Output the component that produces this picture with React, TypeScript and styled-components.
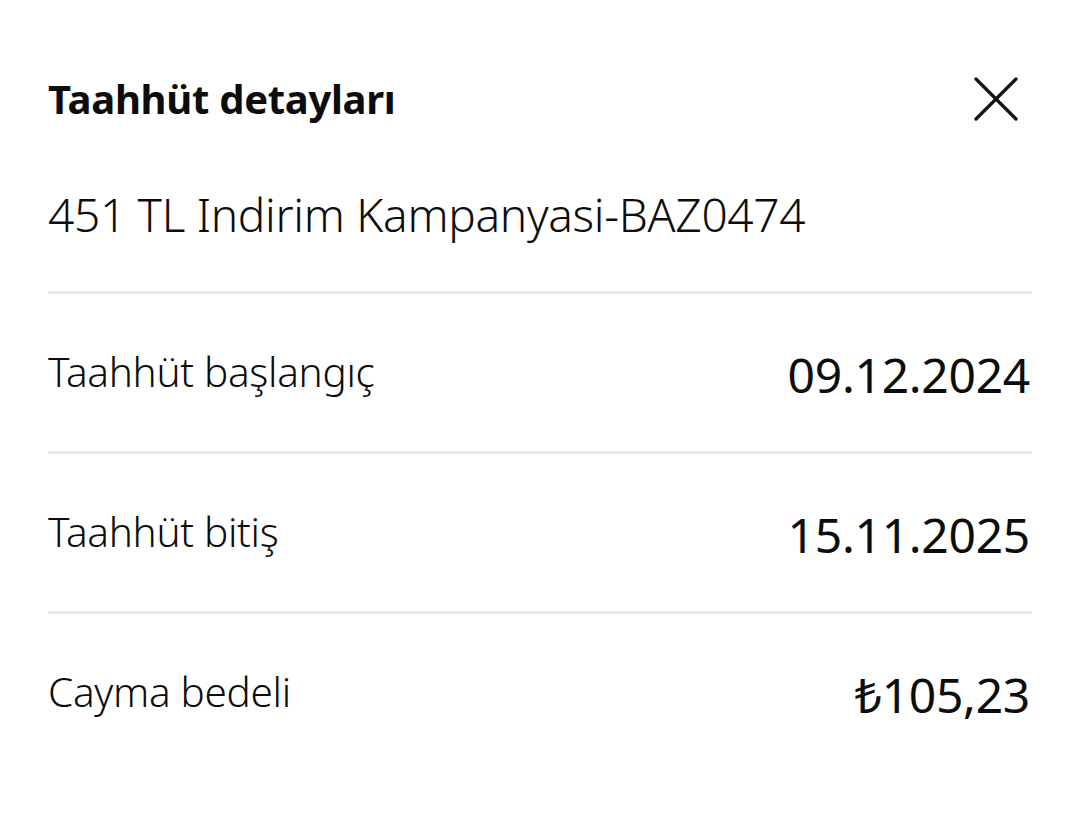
import styled, { createGlobalStyle } from 'styled-components';

const GlobalStyle = createGlobalStyle`
  html, body {
    margin: 0;
    padding: 0;
    background: #ffffff;
  }
  body {
    font-family: 'Noto Sans', 'Open Sans', 'DejaVu Sans', sans-serif;
    color: #0d0d0d;
  }
`;

const details = [
  { label: 'Taahhüt başlangıç', value: '09.12.2024' },
  { label: 'Taahhüt bitiş', value: '15.11.2025' },
  { label: 'Cayma bedeli', value: '₺105,23' },
];

const CloseIcon = () => (
  <svg width="44" height="44" viewBox="0 0 44 44" fill="none">
    <path
      d="M2 2 L42 42 M42 2 L2 42"
      stroke="#111"
      strokeWidth="3.2"
      strokeLinecap="round"
    />
  </svg>
);

const App = () => {
  return (
    <>
      <GlobalStyle />
      <S.Sheet>
        <S.Header>
          <S.Title>Taahhüt detayları</S.Title>
          <S.CloseButton aria-label="Kapat">
            <CloseIcon />
          </S.CloseButton>
        </S.Header>
        <S.Campaign>451 TL Indirim Kampanyasi-BAZ0474</S.Campaign>
        <S.List>
          {details.map((item) => (
            <S.Row key={item.label}>
              <S.Label>{item.label}</S.Label>
              <S.Value>{item.value}</S.Value>
            </S.Row>
          ))}
        </S.List>
      </S.Sheet>
    </>
  );
};

const S = {
  Sheet: styled.div`
    display: flex;
    flex-direction: column;
    width: 100%;
    min-height: 823px;
    box-sizing: border-box;
    padding: 69px 48px 0;
    background: #ffffff;
  `,
  Header: styled.div`
    display: flex;
    align-items: center;
    justify-content: space-between;
    height: 60px;
  `,
  Title: styled.h1`
    margin: 0;
    font-size: 40px;
    font-weight: 700;
    letter-spacing: -0.3px;
    line-height: 60px;
  `,
  CloseButton: styled.button`
    display: flex;
    align-items: center;
    justify-content: center;
    margin-right: 14px;
    padding: 0;
    border: none;
    background: none;
    cursor: pointer;
  `,
  Campaign: styled.div`
    margin-top: 55px;
    font-size: 46px;
    font-weight: 300;
    line-height: 60px;
    letter-spacing: -0.3px;
  `,
  List: styled.div`
    display: flex;
    flex-direction: column;
    margin-top: 47px;
  `,
  Row: styled.div`
    display: flex;
    align-items: center;
    justify-content: space-between;
    height: 157px;
    border-top: 3px solid #e9e9e9;
  `,
  Label: styled.span`
    font-size: 40.5px;
    font-weight: 300;
    letter-spacing: -0.3px;
    padding-bottom: 2px;
  `,
  Value: styled.span`
    font-size: 48px;
    font-weight: 400;
    letter-spacing: -0.3px;
    margin-right: 2px;
    padding-top: 4px;
  `,
};

export default App;
